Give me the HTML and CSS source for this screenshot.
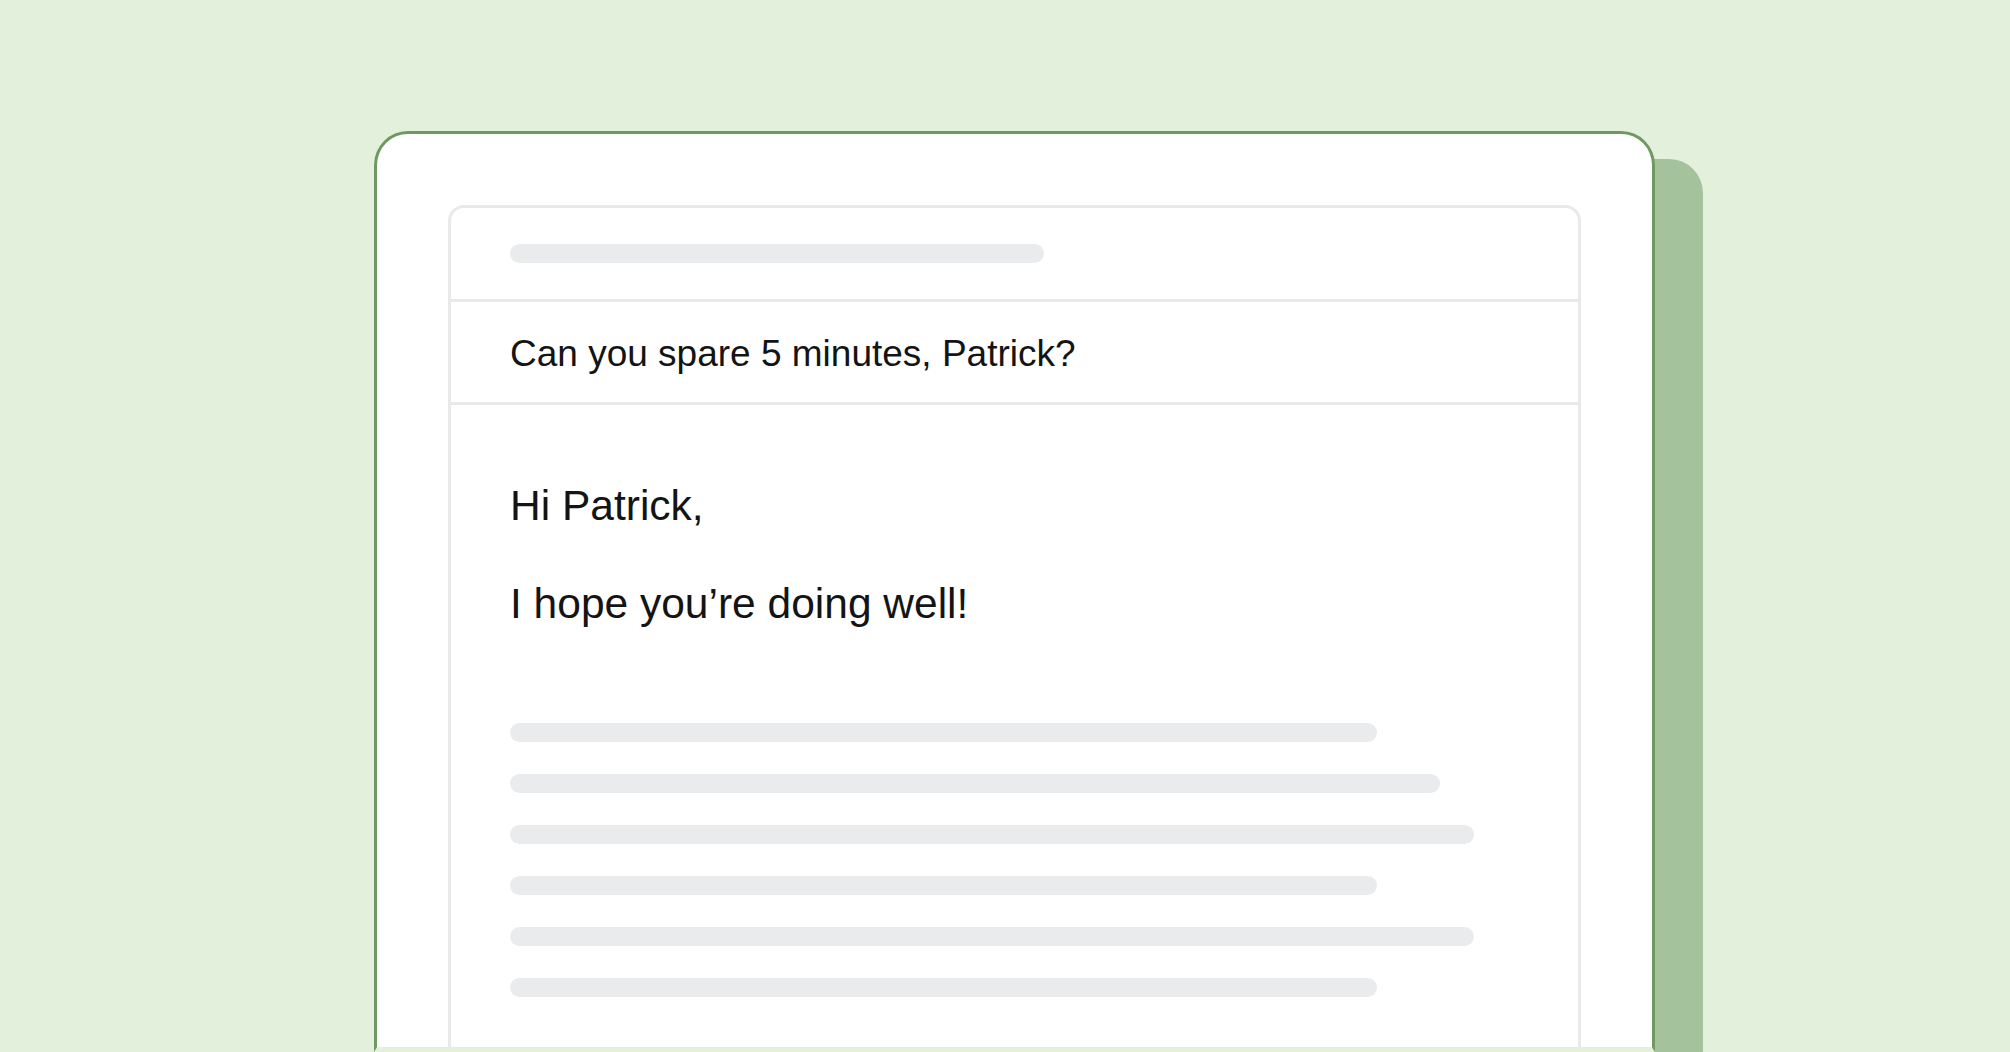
FILE: index.html
```html
<!DOCTYPE html>
<html lang="en">
<head>
    <meta charset="UTF-8">
    <meta name="viewport" content="width=device-width, initial-scale=1.0">
    <title>Email draft</title>
    <link rel="stylesheet" href="styles.css">
</head>
<body>

    <div class="stage">
        <div class="mail-card">
            <div class="mail-window">
                <div class="mail-head">
                    <div class="bar bar-head"></div>
                </div>
                <div class="mail-subject">Can you spare 5 minutes, Patrick?</div>
                <div class="mail-body">
                    <p class="greeting">Hi Patrick,</p>
                    <p class="greeting">I hope you’re doing well!</p>
                    <div class="lines">
                        <div class="bar bar-short"></div>
                        <div class="bar bar-mid"></div>
                        <div class="bar bar-long"></div>
                        <div class="bar bar-short"></div>
                        <div class="bar bar-long"></div>
                        <div class="bar bar-short"></div>
                    </div>
                </div>
            </div>
        </div>
    </div>

</body>
</html>
```

FILE: styles.css
```css
* {
    margin: 0;
    padding: 0;
    box-sizing: border-box;
}

body {
    height: 1052px;
    overflow: hidden;
    background: #e2f0dc;
    font-family: "Liberation Sans", Arial, sans-serif;
    color: #141414;
}

.stage {
    padding-top: 131px;
    padding-left: 374px;
}

.mail-card {
    display: flex;
    flex-direction: column;
    width: 1281px;
    height: 921px;
    padding: 71px 71px 0;
    background: white;
    border: 3px solid #6f9862;
    border-bottom: 5px solid #e2f0dc;
    border-radius: 34px 34px 0 0;
    box-shadow: 48px 28px 0 0 #a4c29b;
}

.mail-window {
    flex: 1;
    border: 3px solid #e9e9e9;
    border-bottom: none;
    border-radius: 16px 16px 0 0;
}

.mail-head {
    padding: 36px 59px 36px;
    border-bottom: 3px solid #e9e9e9;
}

.mail-subject {
    height: 103px;
    padding: 32px 59px 0;
    font-size: 37px;
    line-height: 40px;
    border-bottom: 3px solid #e9e9e9;
}

.mail-body {
    padding: 77px 59px 0;
}

.greeting {
    font-size: 42.5px;
    line-height: 48px;
    margin-bottom: 50px;
}

.lines {
    display: flex;
    flex-direction: column;
    gap: 32px;
    padding-top: 45px;
}

.bar {
    height: 19px;
    border-radius: 10px;
    background: #e9ebec;
}

.bar-head {
    width: 534px;
}

.bar-short {
    width: 867px;
}

.bar-mid {
    width: 930px;
}

.bar-long {
    width: 964px;
}
```
